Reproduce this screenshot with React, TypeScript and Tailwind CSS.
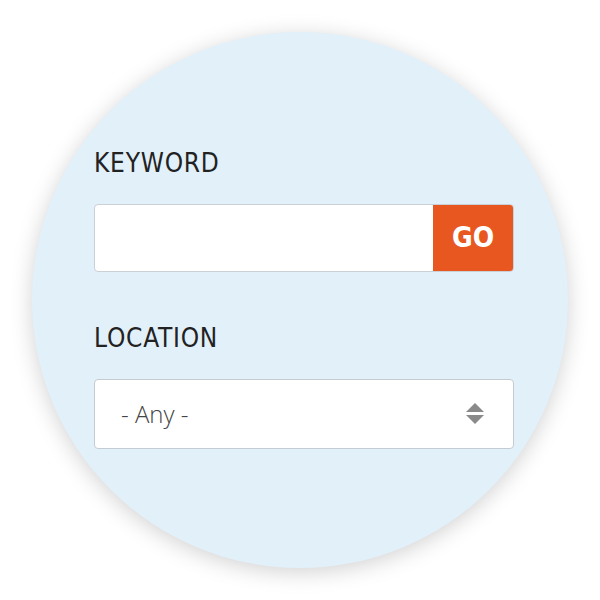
export default function App() {
  return (
    <main className="w-[600px] h-[600px] bg-white flex items-center justify-center overflow-hidden">
      {/* Circle panel */}
      <div className="w-[536px] h-[536px] rounded-full bg-[#e2f0fa] shadow-[0_4px_22px_rgba(0,0,0,0.18)] flex flex-col pl-[62px] pr-[54px] pt-[118px]">
        {/* Keyword */}
        <label className="text-[26px] leading-none tracking-[0.03em] text-[#222] font-['DejaVu_Sans',sans-serif] font-stretch-condensed mb-[28px]">
          KEYWORD
        </label>
        <div className="flex h-[68px] rounded-[4px] border border-[#c9d0d6] bg-white overflow-hidden">
          <input className="flex-1 outline-none px-4" />
          <button className="w-[80px] bg-[#e8571f] text-white text-[28px] font-bold font-['DejaVu_Sans',sans-serif] font-stretch-condensed">
            GO
          </button>
        </div>

        {/* Location */}
        <label className="text-[26px] leading-none tracking-[0.03em] text-[#222] font-['DejaVu_Sans',sans-serif] font-stretch-condensed mt-[53px] mb-[28px]">
          LOCATION
        </label>
        <div className="flex items-center justify-between h-[70px] rounded-[4px] border border-[#c4cbd1] bg-white pl-[26px] pr-[29px]">
          <span className="text-[24px] font-light text-[#444] font-['Open_Sans',sans-serif]">- Any -</span>
          <svg width="18" height="22" viewBox="0 0 18 22" className="fill-[#8a8a8a]">
            <path d="M9 0 L18 9 H0 Z" />
            <path d="M0 12 H18 L9 21 Z" />
          </svg>
        </div>
      </div>
    </main>
  );
}
